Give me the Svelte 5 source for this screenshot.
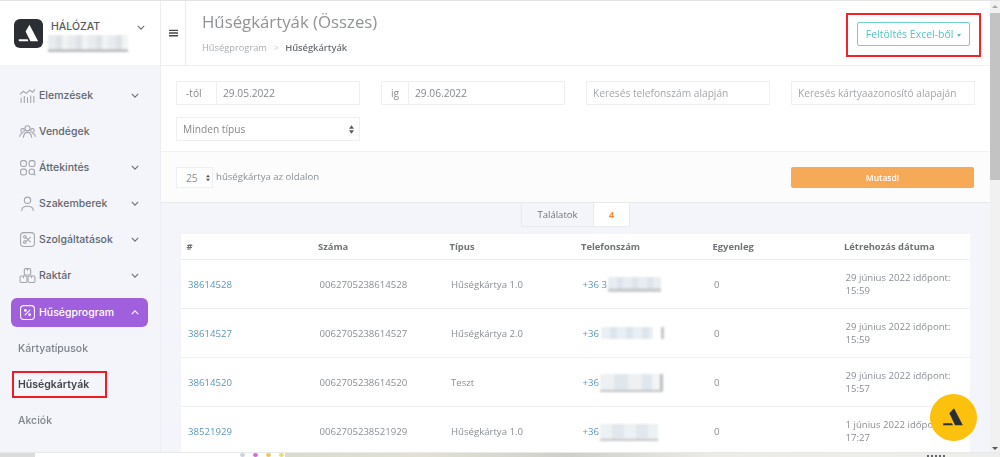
<script>
	const menu = [
		{ label: 'Elemzések', icon: 'chart', arrow: true },
		{ label: 'Vendégek', icon: 'people', arrow: false },
		{ label: 'Áttekintés', icon: 'grid', arrow: true },
		{ label: 'Szakemberek', icon: 'user', arrow: true },
		{ label: 'Szolgáltatások', icon: 'scissors', arrow: true },
		{ label: 'Raktár', icon: 'boxes', arrow: true }
	]

	const cols = ['#', 'Száma', 'Típus', 'Telefonszám', 'Egyenleg', 'Létrehozás dátuma']

	const rows = [
		{ id: '38614528', no: '0062705238614528', type: 'Hűségkártya 1.0', phone: '+36 3', blur: 'b1', date: '29 június 2022 időpont:', time: '15:59' },
		{ id: '38614527', no: '0062705238614527', type: 'Hűségkártya 2.0', phone: '+36', blur: 'b2', date: '29 június 2022 időpont:', time: '15:59' },
		{ id: '38614520', no: '0062705238614520', type: 'Teszt', phone: '+36', blur: 'b3', date: '29 június 2022 időpont:', time: '15:57' },
		{ id: '38521929', no: '0062705238521929', type: 'Hűségkártya 1.0', phone: '+36', blur: 'b4', date: '1 június 2022 időpont:', time: '17:27' }
	]
</script>

<div class="page">
	<div class="columns">
		<aside class="sidebar">
			<div class="brand">
				<div class="logo">
					<svg viewBox="0 0 30 30" width="29" height="29">
						<path d="M16 6 L25 23 L17 23 L12 13 Z" fill="#fff" />
						<path d="M5 21 L14 21 L15 23 L5 23 Z" fill="#fff" />
					</svg>
				</div>
				<div class="brand-text">
					<span class="brand-name">HÁLÓZAT</span>
					<span class="brand-blur"></span>
				</div>
				<svg class="chev brand-chev" viewBox="0 0 10 6" width="8" height="5"><path d="M1 1 L5 5 L9 1" /></svg>
			</div>

			<nav class="nav">
				{#each menu as item}
					<div class="item">
						<svg class="icon" viewBox="0 0 16 16" width="17" height="17">
							{#if item.icon === 'chart'}
								<path d="M1 7 L4 4 L7 6 L10 3 L13 5 L15 2" />
								<path d="M2 15 V10 M5 15 V8.5 M8 15 V9.5 M11 15 V8 M14 15 V8.5" />
							{:else if item.icon === 'people'}
								<circle cx="8" cy="5" r="2.4" />
								<circle cx="3.4" cy="7" r="1.7" />
								<circle cx="12.6" cy="7" r="1.7" />
								<path d="M4 14 C4.5 10 6 8.8 8 8.8 C10 8.8 11.5 10 12 14 M0.5 13 C1 10.5 2 9.6 3.5 9.6 M15.5 13 C15 10.5 14 9.6 12.5 9.6" />
							{:else if item.icon === 'grid'}
								<rect x="1.5" y="1.5" width="5.5" height="5.5" rx="2" />
								<rect x="9.5" y="1.5" width="5.5" height="5.5" rx="2" />
								<rect x="1.5" y="9.5" width="5.5" height="5.5" rx="2" />
								<circle cx="12" cy="12" r="2.6" />
								<path d="M14 14 L15.5 15.5" />
							{:else if item.icon === 'user'}
								<circle cx="8" cy="5" r="3" />
								<path d="M2.5 15 C2.5 11.5 5 10.5 8 10.5 C11 10.5 13.5 11.5 13.5 15" />
							{:else if item.icon === 'scissors'}
								<rect x="1.5" y="1.5" width="13" height="13" rx="3" />
								<circle cx="5.5" cy="5.5" r="1.2" />
								<circle cx="5.5" cy="10.5" r="1.2" />
								<path d="M6.5 6.2 L11 10.5 M6.5 9.8 L11 5.5" />
							{:else}
								<rect x="5" y="1.5" width="6" height="6" rx="1" />
								<rect x="1" y="8.5" width="6.5" height="6" rx="1" />
								<rect x="8.5" y="8.5" width="6.5" height="6" rx="1" />
								<path d="M8 1.5 V3.5 M4.2 8.5 V10.5 M11.8 8.5 V10.5" />
							{/if}
						</svg>
						<span>{item.label}</span>
						{#if item.arrow}
							<svg class="chev" viewBox="0 0 10 6" width="8" height="5"><path d="M1 1 L5 5 L9 1" /></svg>
						{/if}
					</div>
				{/each}

				<div class="item active">
					<svg class="icon" viewBox="0 0 16 16" width="17" height="17">
						<rect x="1.5" y="1.5" width="13" height="13" rx="3" />
						<path d="M5.5 10.5 L10.5 5.5" />
						<circle cx="6" cy="6" r=".8" />
						<circle cx="10" cy="10" r=".8" />
					</svg>
					<span>Hűségprogram</span>
					<svg class="chev" viewBox="0 0 10 6" width="8" height="5"><path d="M1 5 L5 1 L9 5" /></svg>
				</div>

				<div class="subs">
					<div class="sub">Kártyatípusok</div>
					<div class="sub current"><span>Hűségkártyák</span></div>
					<div class="sub">Akciók</div>
				</div>
			</nav>
		</aside>

		<main class="main">
			<header class="header">
				<div class="toggle">
					<svg viewBox="0 0 10 8" width="9" height="8"><path d="M0 1 H10 M0 4 H10 M0 7 H10" /></svg>
				</div>
				<div class="heading">
					<h1>Hűségkártyák (Összes)</h1>
					<div class="crumbs">
						<span>Hűségprogram</span>
						<span class="sep">&gt;</span>
						<b>Hűségkártyák</b>
					</div>
				</div>
				<div class="upload-frame">
					<button class="upload">Feltöltés Excel-ből <i class="caret"></i></button>
				</div>
			</header>

			<section class="filters">
				<div class="field">
					<span class="addon from">-tól</span>
					<span class="value">29.05.2022</span>
				</div>
				<div class="field">
					<span class="addon to">ig</span>
					<span class="value">29.06.2022</span>
				</div>
				<div class="field"><span class="value hint">Keresés telefonszám alapján</span></div>
				<div class="field"><span class="value hint">Keresés kártyaazonosító alapaján</span></div>
				<div class="field select">
					<span>Minden típus</span>
					<svg class="updown" viewBox="0 0 6 10" width="5" height="9"><path d="M3 0 L6 4 H0 Z M3 10 L0 6 H6 Z" /></svg>
				</div>
			</section>

			<section class="paging">
				<div class="per-page">
					<span>25</span>
					<svg class="updown" viewBox="0 0 6 10" width="4" height="8"><path d="M3 0 L6 4 H0 Z M3 10 L0 6 H6 Z" /></svg>
				</div>
				<span class="per-label">hűségkártya az oldalon</span>
				<button class="show">Mutasd!</button>
			</section>

			<section class="results">
				<div class="tabs">
					<span class="tab">Találatok</span>
					<span class="tab count">4</span>
				</div>
				<table>
					<thead>
						<tr>
							{#each cols as col}
								<th>{col}</th>
							{/each}
						</tr>
					</thead>
					<tbody>
						{#each rows as row}
							<tr>
								<td><span class="link">{row.id}</span></td>
								<td>{row.no}</td>
								<td>{row.type}</td>
								<td>
									<div class="phone">
										<span class="link">{row.phone}</span>
										<span class="redact {row.blur}"></span>
									</div>
								</td>
								<td>0</td>
								<td class="date">{row.date}<br />{row.time}</td>
							</tr>
						{/each}
					</tbody>
				</table>
			</section>
		</main>

		<div class="scrollbar">
			<i class="arrow up"></i>
			<div class="thumb"></div>
			<i class="arrow down"></i>
		</div>
	</div>

	<div class="taskbar">
		<span class="task-grey"></span>
		<span class="task-white">
			<i class="dot-a"></i>
			<i class="dot-b"></i>
			<i class="dot-c"></i>
			<i class="dot-d"></i>
		</span>
		<span class="task-wall"><i class="clock"></i></span>
	</div>

	<div class="fab">
		<svg viewBox="0 0 30 30" width="31" height="31">
			<path d="M15.5 6 L24 22.5 L16.5 22.5 L11 11 Z" fill="#2b2f33" />
			<path d="M5 20.5 L13.5 20.5 L14.5 22.5 L5 22.5 Z" fill="#2b2f33" />
		</svg>
	</div>
</div>

<style>
	:global(body) {
		margin: 0;
		overflow: hidden;
		background: #fff;
	}

	.page {
		position: relative;
		width: 1000px;
		height: 457px;
		overflow: hidden;
		display: flex;
		flex-direction: column;
		border-top: 1px solid #e4e4e4;
		box-sizing: border-box;
		font-family: "Open Sans", sans-serif;
		font-size: 10.2px;
		color: #8a8f94;
		filter: blur(.4px);
	}

	.columns {
		flex: 1;
		min-height: 0;
		display: flex;
	}

	/* sidebar */
	.sidebar {
		width: 161px;
		flex: none;
		background: #f3f5fb;
		font-family: Inter, sans-serif;
		border-right: 1px solid #eceef3;
		box-sizing: border-box;
	}

	.brand {
		height: 64px;
		background: #fff;
		display: flex;
		align-items: center;
		padding-left: 14px;
		padding-right: 15px;
	}

	.logo {
		width: 29px;
		height: 29px;
		background: #2b2f33;
		border-radius: 6px;
		flex: none;
	}

	.brand-text {
		display: flex;
		flex-direction: column;
		margin-left: 8px;
		flex: 1;
		margin-top: 6px;
	}

	.brand-name {
		font-size: 10.5px;
		font-weight: 500;
		color: #55595e;
		line-height: 13px;
	}

	.brand-blur {
		margin-top: 2px;
		margin-left: -3px;
		width: 80px;
		height: 17px;
		background:
			linear-gradient(to bottom, transparent 14px, #b8babc 15px),
			repeating-linear-gradient(to right, #e9ecee 0, #e9ecee 8px, #dfe3e5 8px, #dfe3e5 14px, #f1f3f4 14px, #f1f3f4 20px);
		filter: blur(.8px);
	}

	.chev {
		fill: none;
		stroke: #6b7075;
		stroke-width: 1.4;
		flex: none;
	}

	.brand-chev {
		margin-top: -11px;
	}

	.nav {
		padding-top: 15.5px;
	}

	.item {
		height: 29px;
		margin: 0 12px 7.2px 11px;
		padding: 0 9px 0 8px;
		display: flex;
		align-items: center;
		border-radius: 6px;
		font-size: 10.5px;
		font-weight: 500;
		color: #62676f;
	}

	.item span {
		flex: 1;
		margin-left: 3px;
	}

	.icon {
		fill: none;
		stroke: #a2a6ac;
		stroke-width: 1;
		flex: none;
	}

	.active {
		background: #a05fdc;
		color: #fff;
	}

	.active .icon,
	.active .chev {
		stroke: #fff;
	}

	.subs {
		margin-top: -3px;
	}

	.sub {
		height: 36px;
		display: flex;
		align-items: center;
		padding-left: 18px;
		font-size: 10.5px;
		font-weight: 500;
		color: #7f848a;
	}

	.sub.current span {
		color: #41464c;
		font-weight: 600;
		border: 2px solid #f01c24;
		padding: 5px 16px 5px 4px;
		margin-left: -6px;
	}

	/* main */
	.main {
		flex: 1;
		min-width: 0;
		background: #f3f5fa;
	}

	.header {
		height: 65px;
		background: #fff;
		display: flex;
		align-items: center;
		border-bottom: 1px solid #f0f0f0;
		box-sizing: border-box;
	}

	.toggle {
		width: 25px;
		height: 100%;
		flex: none;
		display: flex;
		align-items: center;
		justify-content: center;
		border-right: 1px solid #ececec;
		box-sizing: border-box;
	}

	.toggle path {
		stroke: #44484c;
		stroke-width: 1.5;
	}

	.heading {
		flex: 1;
		padding-left: 16px;
		margin-top: -2px;
	}

	h1 {
		margin: 0;
		font-size: 16.8px;
		font-weight: 400;
		line-height: 24px;
		color: #8f9396;
	}

	.crumbs {
		font-size: 9.3px;
		line-height: 14px;
		margin-top: 7px;
		color: #a9adb1;
	}

	.crumbs .sep {
		margin: 0 4px;
		color: #c9cccf;
	}

	.crumbs b {
		font-weight: 600;
		color: #6a6e72;
	}

	.upload-frame {
		border: 2px solid #f5222a;
		padding: 7px 9px 9px 9.5px;
		margin-right: 9px;
		margin-top: 4px;
	}

	.upload {
		display: block;
		width: 113px;
		height: 24px;
		padding: 0;
		background: #fff;
		border: 1px solid #6fd0cf;
		border-radius: 2px;
		font: 10.5px "Open Sans", sans-serif;
		color: #55c2c2;
	}

	.caret {
		display: inline-block;
		vertical-align: middle;
		border: 2.5px solid transparent;
		border-top: 3px solid #55c2c2;
		border-bottom: 0;
		margin-left: 1px;
	}

	/* filters */
	.filters {
		height: 86px;
		background: #fff;
		box-sizing: border-box;
		padding: 15px 16px 0 15px;
		display: grid;
		grid-template-columns: repeat(4, 183.5px);
		grid-auto-rows: 24px;
		column-gap: 21.5px;
		row-gap: 12px;
		border-bottom: 1px solid #f2f2f2;
	}

	.field {
		display: flex;
		align-items: center;
		border: 1px solid #eeeff1;
		box-sizing: border-box;
		background: #fff;
		color: #85898d;
	}

	.addon {
		height: 100%;
		display: flex;
		align-items: center;
		padding-left: 9px;
		border-right: 1px solid #eeeff1;
		box-sizing: border-box;
		flex: none;
	}

	.from {
		width: 40px;
	}

	.to {
		width: 27px;
	}

	.value {
		padding-left: 6px;
	}

	.hint {
		color: #a3a7ab;
	}

	.select {
		justify-content: space-between;
		padding: 0 5px 0 6px;
	}

	.updown {
		fill: #55595e;
		flex: none;
	}

	/* paging */
	.paging {
		height: 51px;
		background: #fcfcfc;
		box-sizing: border-box;
		padding: 15px 16px 0 15px;
		display: flex;
		align-items: flex-start;
		border-bottom: 1px solid #e8e9eb;
	}

	.per-page {
		width: 37px;
		height: 21px;
		background: #fff;
		border: 1px solid #eeeff1;
		box-sizing: border-box;
		display: flex;
		align-items: center;
		justify-content: space-between;
		padding: 0 2px 0 9px;
	}

	.per-label {
		flex: 1;
		padding-left: 3px;
		line-height: 19px;
		font-size: 9.6px;
		color: #8a8f94;
	}

	.show {
		width: 183px;
		height: 21px;
		padding: 0;
		border: 0;
		border-radius: 2px;
		background: #f6aa58;
		color: #fff;
		font: 600 8.5px "Open Sans", sans-serif;
	}

	/* results */
	.results {
		padding: 0 20px;
	}

	.tabs {
		display: flex;
		justify-content: center;
		height: 24px;
		box-sizing: border-box;
	}

	.tab {
		display: flex;
		align-items: center;
		justify-content: center;
		width: 73px;
		border: 1px solid #e9eaed;
		border-top: 0;
		box-sizing: border-box;
		font-size: 9.5px;
		color: #6f7377;
	}

	.count {
		width: 36px;
		border-left: 0;
		background: #fff;
		color: #ee8f3f;
		font-weight: 700;
	}

	table {
		width: 789px;
		margin-top: 7px;
		table-layout: fixed;
		border-collapse: collapse;
		background: #fff;
	}

	th {
		height: 25px;
		padding: 0 0 0 5.5px;
		text-align: left;
		font-size: 9.4px;
		font-weight: 700;
		color: #6f7377;
		border-bottom: 1px solid #eeeff1;
	}

	td {
		height: 48px;
		padding: 0 7px;
		font-size: 9.6px;
		line-height: 13px;
		color: #8a8f94;
		border-bottom: 1px solid #eeeff1;
	}

	.link {
		color: #5a97bc;
	}

	.date {
		padding-right: 0;
	}

	.phone {
		display: flex;
		align-items: center;
	}

	.redact {
		display: block;
		margin-left: 1px;
		filter: blur(1px);
	}

	.b1 {
		width: 53px;
		height: 15px;
		margin-top: 1px;
		background:
			linear-gradient(to bottom, transparent 11px, #c8cacc 12px),
			repeating-linear-gradient(to right, #e8edf1 0, #e8edf1 9px, #dde4ea 9px, #dde4ea 15px);
	}

	.b2 {
		width: 63px;
		height: 12px;
		margin-left: 2px;
		background:
			linear-gradient(to right, transparent 52px, #fff 52px, #fff 60px, #c4c6c8 60px),
			repeating-linear-gradient(to right, #e9eff4 0, #e9eff4 9px, #dce5ec 9px, #dce5ec 16px);
	}

	.b3 {
		width: 63px;
		height: 16px;
		margin-top: 2px;
		background:
			linear-gradient(to right, transparent 52px, #f2f4f5 52px, #f2f4f5 60px, #bcbec0 60px),
			repeating-linear-gradient(to right, #edf1f4 0, #edf1f4 14px, #dfe7ed 14px, #dfe7ed 28px);
		border-bottom: 2px solid #c0c2c4;
	}

	.b4 {
		width: 58px;
		height: 15px;
		margin-top: 3px;
		background: repeating-linear-gradient(to right, #ecf1f4 0, #ecf1f4 12px, #e0e8ee 12px, #e0e8ee 24px);
		border-bottom: 2px solid #c4c6c8;
	}

	/* page scrollbar */
	.scrollbar {
		position: relative;
		width: 10px;
		flex: none;
		background: #f1f1f1;
		padding-top: 12px;
		box-sizing: border-box;
	}

	.thumb {
		height: 167px;
		background: #c3c3c3;
	}

	.arrow {
		position: absolute;
		left: 2px;
		border: 3px solid transparent;
	}

	.arrow.up {
		top: 4px;
		border-top: 0;
		border-bottom: 3px solid #a9a9a9;
	}

	.arrow.down {
		bottom: 2px;
		border-bottom: 0;
		border-top: 3px solid #555;
	}

	/* bottom strip */
	.taskbar {
		height: 5px;
		flex: none;
		display: flex;
		border-top: 1px solid #e9e9e9;
		box-sizing: border-box;
	}

	.task-grey {
		width: 35px;
		background: #dcdcdc;
	}

	.task-white {
		width: 250px;
		background: #fff;
		display: flex;
		justify-content: flex-end;
		gap: 8px;
		padding-right: 1px;
		box-sizing: border-box;
	}

	.task-white i {
		width: 5px;
		height: 4px;
		border-radius: 50%;
	}

	.dot-a {
		background: #c9d3dc;
	}

	.dot-b {
		background: #d66be0;
	}

	.dot-c {
		background: #e8c860;
	}

	.dot-d {
		background: #e8dc70;
	}

	.task-wall {
		flex: 1;
		display: flex;
		justify-content: flex-end;
		padding-right: 55px;
		background: linear-gradient(to right, #d9dccb, #e2e0d2 20%, #cfcfca 40%, #ecebe6 60%, #eeeeec);
	}

	.clock {
		width: 18px;
		height: 2px;
		margin-top: 2px;
		background: repeating-linear-gradient(to right, #666 0, #666 2px, transparent 2px, transparent 4px);
	}

	.fab {
		position: absolute;
		left: 930px;
		top: 393px;
		width: 47px;
		height: 47px;
		border-radius: 50%;
		background: #fcc10c;
		display: flex;
		align-items: center;
		justify-content: center;
	}
</style>
